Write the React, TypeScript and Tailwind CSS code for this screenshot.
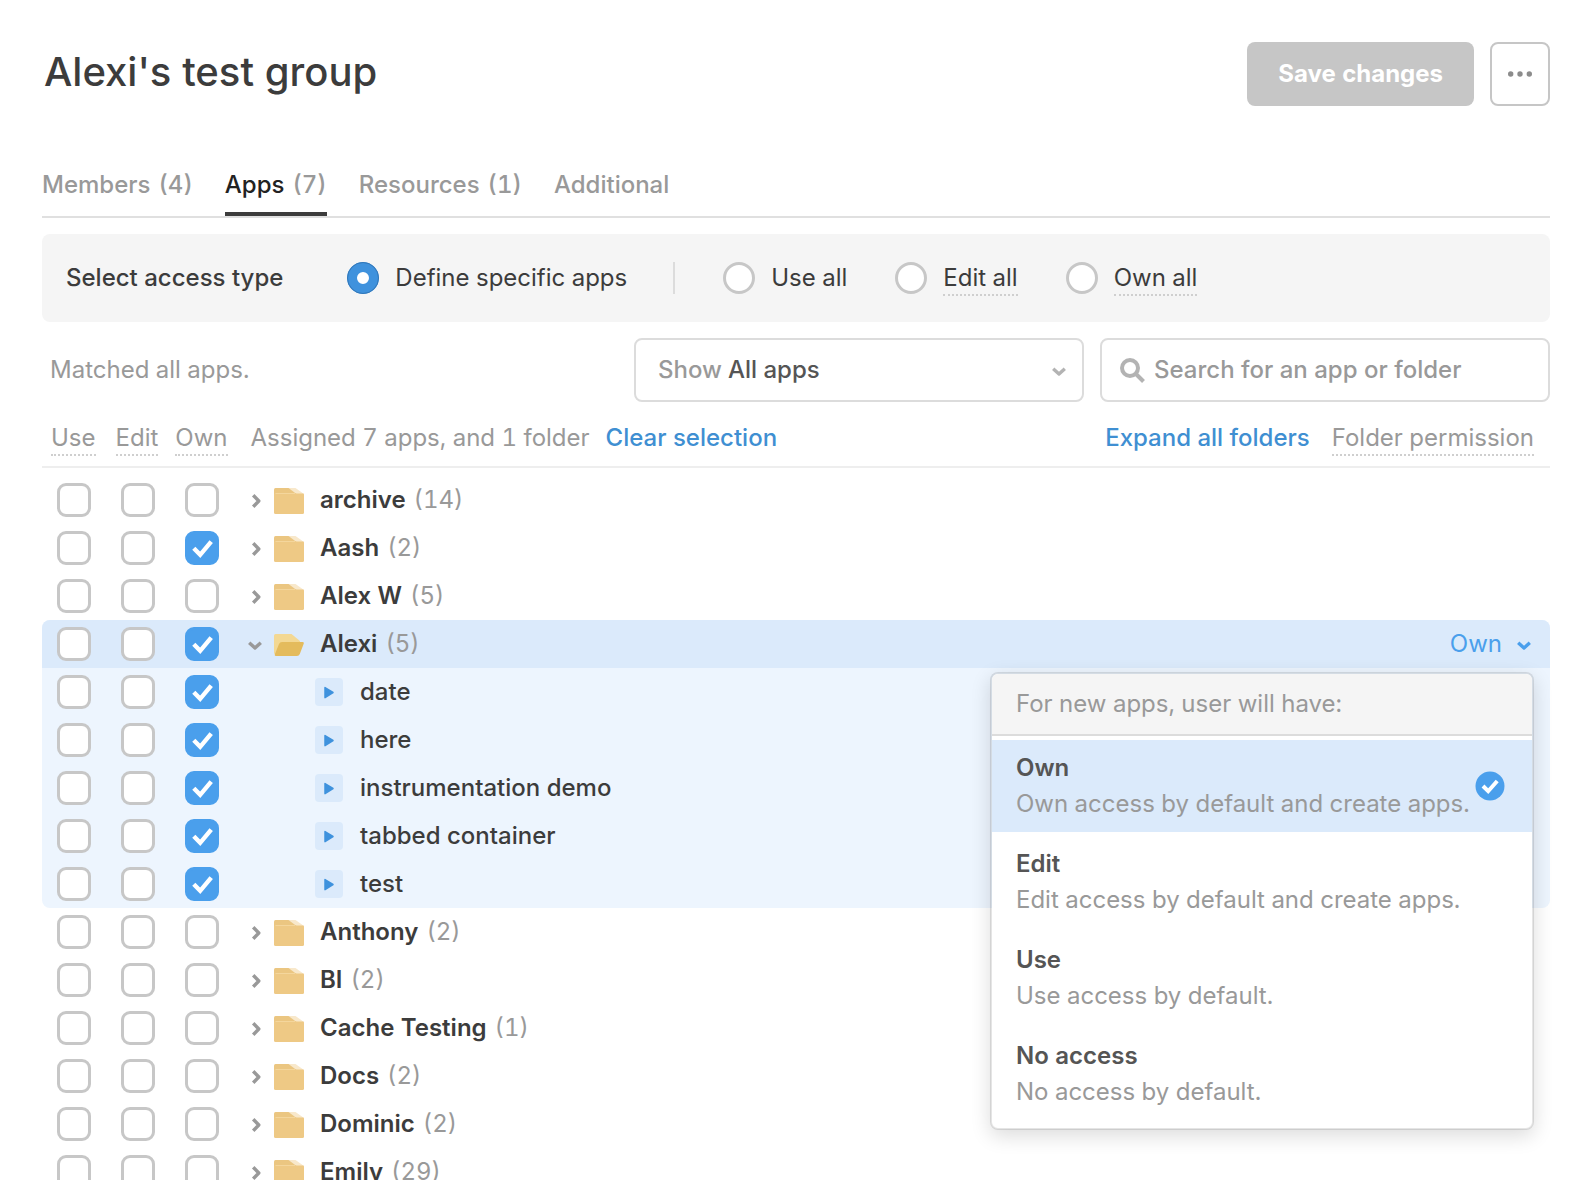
import { useState } from "react";

type Access = "use" | "edit" | "own";

type Folder = {
  name: string;
  count: number;
  own?: boolean;
  apps?: string[];
};

const ACCESS_COLUMNS: Access[] = ["use", "edit", "own"];

const TABS = [
  { label: "Members", count: 4 },
  { label: "Apps", count: 7 },
  { label: "Resources", count: 1 },
  { label: "Additional" },
];

const ACCESS_TYPES = [
  { id: "use-all", label: "Use all", hint: false },
  { id: "edit-all", label: "Edit all", hint: true },
  { id: "own-all", label: "Own all", hint: true },
];

const FOLDERS: Folder[] = [
  { name: "archive", count: 14 },
  { name: "Aash", count: 2, own: true },
  { name: "Alex W", count: 5 },
  {
    name: "Alexi",
    count: 5,
    own: true,
    apps: ["date", "here", "instrumentation demo", "tabbed container", "test"],
  },
  { name: "Anthony", count: 2 },
  { name: "BI", count: 2 },
  { name: "Cache Testing", count: 1 },
  { name: "Docs", count: 2 },
  { name: "Dominic", count: 2 },
  { name: "Emily", count: 29 },
];

const MENU_OPTIONS = [
  { label: "Own", description: "Own access by default and create apps." },
  { label: "Edit", description: "Edit access by default and create apps." },
  { label: "Use", description: "Use access by default." },
  { label: "No access", description: "No access by default." },
];

const ChevronDown = ({ className }: { className: string }) => (
  <svg viewBox="0 0 14 10" className={className} fill="none" stroke="currentColor" strokeWidth="3.4" aria-hidden="true">
    <path d="M1.2 1.8L7 7L12.8 1.8" strokeLinejoin="round" />
  </svg>
);

const ChevronRight = () => (
  <svg viewBox="0 0 10 14" className="mt-[2px] h-[14px] w-[10px]" fill="none" stroke="currentColor" strokeWidth="3.4" aria-hidden="true">
    <path d="M2.2 1.2L7.8 7L2.2 12.8" strokeLinejoin="round" />
  </svg>
);

const FolderIcon = () => (
  <svg viewBox="0 0 30 26" className="mt-[2px] h-[26px] w-[30px]" aria-hidden="true">
    <path d="M13 0H21.5L30 6V8H13Z" fill="#f8e8cb" />
    <path d="M1.5 0H14.5L22.5 6H0V1.5Q0 0 1.5 0Z" fill="#ebc681" />
    <path d="M0 5.5H29Q30 5.5 30 6.5V24.5Q30 26 28.5 26H1.5Q0 26 0 24.5Z" fill="#eec985" />
    <path d="M1.5 5.5H21" stroke="#f4d69c" strokeWidth="1" />
  </svg>
);

const FolderOpenIcon = () => (
  <svg viewBox="0 0 30 22" className="mt-[2px] h-[22px] w-[30px]" aria-hidden="true">
    <path d="M1.5 0H17.5L26 7V10L6 20H1Q0 20 0 19V1.5Q0 0 1.5 0Z" fill="#f3d893" />
    <path d="M8 8H28.5Q30.3 8 29.7 9.7L25.8 20Q25 22 23 22H2Q0.3 22 0.8 20.4L5 10Q5.8 8 8 8Z" fill="#e4bb5c" />
  </svg>
);

const AppIcon = () => (
  <svg viewBox="0 0 28 28" className="h-7 w-7" aria-hidden="true">
    <rect width="28" height="28" rx="4" fill="#dbeafb" />
    <path d="M10 9.6L18 14.5L10 19.6Z" fill="#3f92dd" stroke="#3f92dd" strokeWidth="1.5" strokeLinejoin="round" />
  </svg>
);

const AccessCheckbox = ({ label, initial }: { label: string; initial: boolean }) => {
  const [checked, setChecked] = useState(initial);

  return (
    <span className="grid h-[34px] w-[34px]">
      <input
        type="checkbox"
        aria-label={label}
        checked={checked}
        onChange={() => setChecked(!checked)}
        className="col-start-1 row-start-1 h-[34px] w-[34px] appearance-none rounded-[9px] border-3 border-[#c7c7c7] bg-white checked:border-[#4a9fec] checked:bg-[#4a9fec]"
      />
      {checked ? (
        <svg
          viewBox="0 0 34 34"
          className="pointer-events-none col-start-1 row-start-1"
          fill="none"
          stroke="white"
          strokeWidth="4.4"
          aria-hidden="true"
        >
          <path d="M8.8 17.2L15.2 23.8L26.2 10.6" />
        </svg>
      ) : null}
    </span>
  );
};

const AccessBoxes = ({ name, own }: { name: string; own: boolean }) => (
  <div className="flex w-[193px] shrink-0 gap-[30px] pl-[15px]">
    {ACCESS_COLUMNS.map((access) => (
      <AccessCheckbox key={access} label={`${name}: ${access}`} initial={access === "own" && own} />
    ))}
  </div>
);

const PermissionMenu = ({ value, onSelect }: { value: string; onSelect: (value: string) => void }) => (
  <div
    role="menu"
    className="absolute top-[52px] right-4 z-10 w-[544px] overflow-hidden rounded-lg border-2 border-black/10 bg-white bg-clip-padding shadow-[0_6px_20px_rgba(0,0,0,0.14)]"
  >
    <p className="flex h-[62px] items-center border-b-2 border-[#dcdcdc] bg-[#f5f5f5] px-6 text-[#999]">
      For new apps, user will have:
    </p>
    <div className="flex flex-col gap-1 pt-1 pb-2">
      {MENU_OPTIONS.map((option) => {
        const selected = option.label === value;
        return (
          <button
            key={option.label}
            type="button"
            role="menuitemradio"
            aria-checked={selected}
            onClick={() => onSelect(option.label)}
            className={[
              "flex h-[92px] items-center justify-between pr-[27px] pl-6 text-left leading-9 whitespace-nowrap",
              selected ? "bg-[#dbeafb]" : "bg-white",
            ].join(" ")}
          >
            <span>
              <span className="block font-semibold text-[#555]">{option.label}</span>
              <span className="block text-[#999]">{option.description}</span>
            </span>
            {selected ? (
              <svg viewBox="0 0 30 30" className="h-[30px] w-[30px] shrink-0" fill="none" aria-hidden="true">
                <circle cx="15" cy="15" r="14.5" fill="#4a9fec" />
                <path d="M8 15L13.2 20.2L22.2 10" stroke="white" strokeWidth="4" />
              </svg>
            ) : null}
          </button>
        );
      })}
    </div>
  </div>
);

const FolderRow = ({ folder }: { folder: Folder }) => {
  const [permission, setPermission] = useState("Own");
  const open = Boolean(folder.apps);

  return (
    <li className={open ? "relative rounded-lg bg-[#edf5fe]" : ""}>
      <div className={["flex h-12 items-center", open ? "rounded-t-lg bg-[#dbeafb]" : ""].join(" ")}>
        <AccessBoxes name={folder.name} own={Boolean(folder.own)} />
        <button
          type="button"
          aria-expanded={open}
          aria-label={`Toggle ${folder.name}`}
          className="ml-3 flex h-8 w-[27px] items-center justify-start pl-1 text-[#999]"
        >
          {open ? <ChevronDown className="-ml-[3px] mt-1 h-[10px] w-[14px]" /> : <ChevronRight />}
        </button>
        {open ? <FolderOpenIcon /> : <FolderIcon />}
        <span className="ml-4 font-semibold text-[#3c3c3c]">{folder.name}</span>
        <span className="ml-2 text-[#999]">({folder.count})</span>
        {open ? (
          <button type="button" aria-haspopup="menu" className="ml-auto flex items-center gap-[15px] pr-[19px] text-[#4a9fec]">
            {permission}
            <ChevronDown className="mt-1 h-[10px] w-[14px]" />
          </button>
        ) : null}
      </div>

      {folder.apps ? (
        <ul>
          {folder.apps.map((app) => (
            <li key={app} className="flex h-12 items-center">
              <AccessBoxes name={app} own />
              <span className="ml-20 flex items-center gap-[17px] font-medium text-[#3c3c3c]">
                <AppIcon />
                {app}
              </span>
            </li>
          ))}
        </ul>
      ) : null}

      {open ? <PermissionMenu value={permission} onSelect={setPermission} /> : null}
    </li>
  );
};

const radioClass =
  "h-8 w-8 appearance-none rounded-full border-3 border-[#c7c7c7] bg-white checked:border-[10px] checked:border-[#3f92dd] checked:outline-1 checked:-outline-offset-1 checked:outline-[#3478b8]";

const hintClass = "border-b-2 border-dotted border-[#cfcfcf]";

export default function App() {
  const [tab, setTab] = useState("Apps");
  const [accessType, setAccessType] = useState("specific");

  return (
    <main className="h-screen overflow-hidden bg-white px-[42px] pt-[42px] font-[Inter,sans-serif] text-2xl leading-8 tabular-nums">
      <header className="flex items-start">
        <h1 className="pl-[2px] text-[40px] leading-[60px] font-medium text-[#3c3c3c]">Alexi's test group</h1>
        <button
          type="button"
          className="ml-auto flex h-16 items-center rounded-lg bg-[#c6c6c6] px-[31px] font-bold text-white"
        >
          Save changes
        </button>
        <button
          type="button"
          aria-label="More actions"
          className="ml-4 flex h-16 w-[60px] items-center justify-center rounded-lg border-2 border-[#c6c6c6] text-[#8c8c8c]"
        >
          <svg viewBox="0 0 24 6" className="h-[6px] w-6" fill="currentColor" aria-hidden="true">
            <circle cx="2.7" cy="3" r="2.7" />
            <circle cx="12" cy="3" r="2.7" />
            <circle cx="21.3" cy="3" r="2.7" />
          </svg>
        </button>
      </header>

      <nav className="mt-[46px] flex gap-8 border-b-2 border-[#e0e0e0]">
        {TABS.map(({ label, count }) => (
          <button
            key={label}
            type="button"
            onClick={() => setTab(label)}
            className={[
              "flex h-16 items-center gap-2 border-b-4 pt-[6px] font-medium",
              tab === label ? "border-[#3c3c3c] text-[#222]" : "border-transparent text-[#999]",
            ].join(" ")}
          >
            {label}
            {count ? <span className="text-[#999]">({count})</span> : null}
          </button>
        ))}
      </nav>

      <fieldset className="mt-4 flex h-[88px] items-center rounded-lg bg-[#f5f5f5] px-6 text-[#3c3c3c]">
        <span className="mr-16 font-medium">Select access type</span>
        <label className="flex items-center gap-4">
          <input
            type="radio"
            name="access-type"
            checked={accessType === "specific"}
            onChange={() => setAccessType("specific")}
            className={radioClass}
          />
          Define specific apps
        </label>
        <span className="ml-[46px] h-8 w-[2px] bg-[#dcdcdc]" />
        {ACCESS_TYPES.map(({ id, label, hint }) => (
          <label key={id} className="ml-12 flex items-center gap-4">
            <input
              type="radio"
              name="access-type"
              checked={accessType === id}
              onChange={() => setAccessType(id)}
              className={radioClass}
            />
            <span className={hint ? `${hintClass} pt-[2px]` : ""}>{label}</span>
          </label>
        ))}
      </fieldset>

      <div className="mt-4 flex items-center gap-4">
        <p className="flex-1 pl-2 text-[#999]">Matched all apps.</p>
        <div className="flex h-16 w-[450px] items-center rounded-lg border-2 border-[#dcdcdc] pr-4 pl-[22px] font-medium">
          <label htmlFor="app-filter" className="text-[#999]">
            Show
          </label>
          <select id="app-filter" className="ml-[6px] flex-1 appearance-none bg-transparent text-[#555]">
            <option>All apps</option>
          </select>
          <ChevronDown className="pointer-events-none mt-1 h-[10px] w-[14px] text-[#b3b3b3]" />
        </div>
        <label className="flex h-16 w-[450px] items-center gap-[9px] rounded-lg border-2 border-[#dcdcdc] px-[18px]">
          <svg viewBox="0 0 25 25" className="h-[25px] w-[25px] shrink-0 text-[#b3b3b3]" fill="none" stroke="currentColor" strokeWidth="4" aria-hidden="true">
            <circle cx="10" cy="10" r="8" />
            <path d="M15.5 15.5L23.5 23.5" />
          </svg>
          <input
            type="search"
            aria-label="Search for an app or folder"
            placeholder="Search for an app or folder"
            className="w-full font-medium outline-none placeholder:text-[#999]"
          />
        </label>
      </div>

      <div className="mt-5 flex h-[46px] items-start border-b-2 border-[#eee] pr-4 pl-[9px] whitespace-nowrap text-[#999]">
        <span className={hintClass}>Use</span>
        <span className={`${hintClass} ml-5`}>Edit</span>
        <span className={`${hintClass} ml-[17px]`}>Own</span>
        <span className="ml-[23px]">Assigned 7 apps, and 1 folder</span>
        <button type="button" className="ml-4 font-medium text-[#3f8fd2]">
          Clear selection
        </button>
        <button type="button" className="ml-auto font-medium text-[#3f8fd2]">
          Expand all folders
        </button>
        <span className={`${hintClass} ml-[22px]`}>Folder permission</span>
      </div>

      <ul className="mt-2">
        {FOLDERS.map((folder) => (
          <FolderRow key={folder.name} folder={folder} />
        ))}
      </ul>
    </main>
  );
}
